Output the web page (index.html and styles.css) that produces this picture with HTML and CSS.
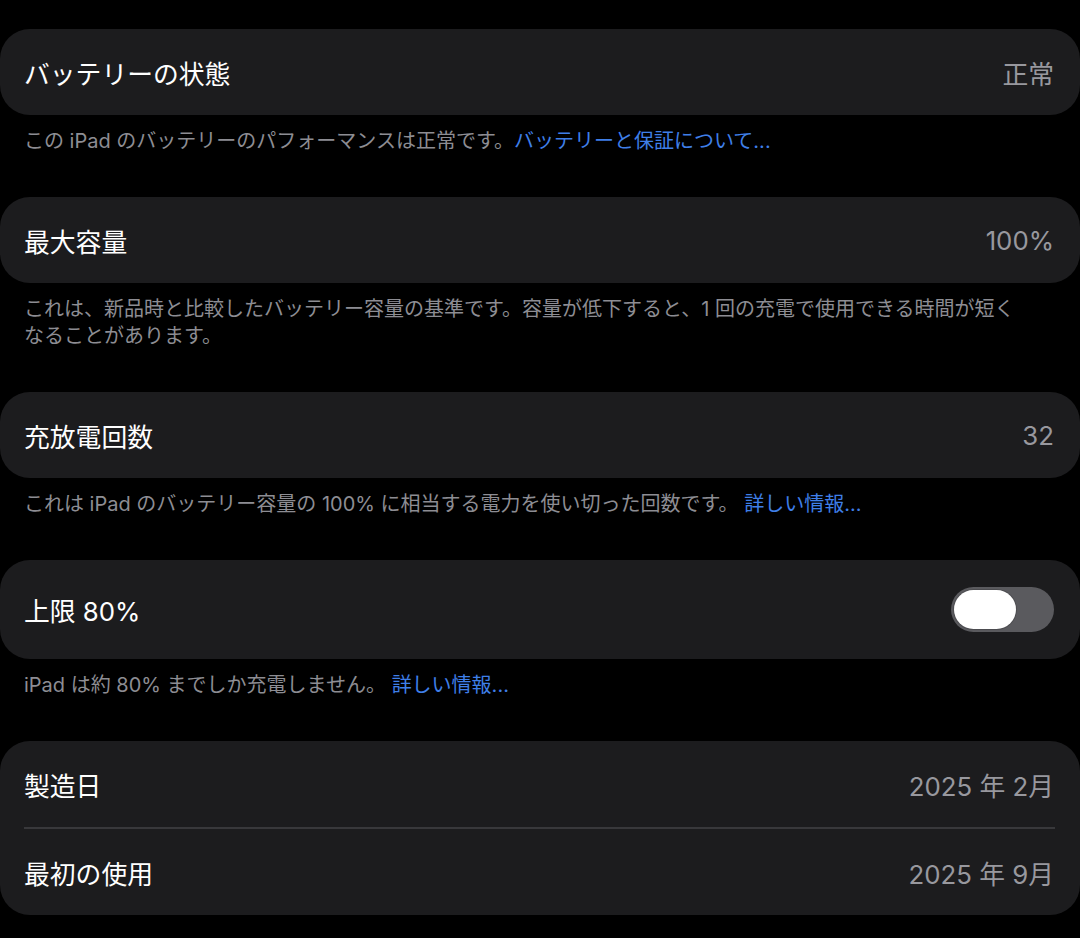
FILE: index.html
```html
<!DOCTYPE html>
<html lang="ja">
<head>
    <meta charset="UTF-8">
    <meta name="viewport" content="width=device-width, initial-scale=1.0">
    <title>バッテリーの状態</title>
    <link rel="stylesheet" href="styles.css">
</head>
<body>

    <div class="settings">
        <div class="group">
            <div class="row">
                <span class="label">バッテリーの状態</span>
                <span class="value">正常</span>
            </div>
        </div>
        <p class="footer">この iPad のバッテリーのパフォーマンスは正常です。<a href="#">バッテリーと保証について...</a></p>

        <div class="group">
            <div class="row">
                <span class="label">最大容量</span>
                <span class="value">100%</span>
            </div>
        </div>
        <p class="footer">これは、新品時と比較したバッテリー容量の基準です。容量が低下すると、1 回の充電で使用できる時間が短く<br>なることがあります。</p>

        <div class="group">
            <div class="row">
                <span class="label">充放電回数</span>
                <span class="value">32</span>
            </div>
        </div>
        <p class="footer">これは iPad のバッテリー容量の 100% に相当する電力を使い切った回数です。 <a href="#">詳しい情報...</a></p>

        <div class="group">
            <div class="row row-toggle">
                <span class="label">上限 80%</span>
                <span class="switch"><span class="knob"></span></span>
            </div>
        </div>
        <p class="footer">iPad は約 80% までしか充電しません。 <a href="#">詳しい情報...</a></p>

        <div class="group">
            <div class="row">
                <span class="label">製造日</span>
                <span class="value">2025 年 2月</span>
            </div>
            <div class="divider"></div>
            <div class="row">
                <span class="label">最初の使用</span>
                <span class="value">2025 年 9月</span>
            </div>
        </div>
    </div>

</body>
</html>
```

FILE: styles.css
```css
body {
    margin: 0;
    background-color: #000;
    font-family: 'Inter', 'Noto Sans CJK JP', sans-serif;
    color: #fff;
}

.settings {
    padding-top: 29px;
    display: flex;
    flex-direction: column;
}

.group {
    background-color: #1c1c1e;
    border-radius: 30px;
}

.row {
    display: flex;
    align-items: center;
    justify-content: space-between;
    height: 86px;
    padding: 0 26px 0 24px;
}

.row-toggle {
    height: 99px;
}

.label {
    font-size: 25.8px;
    color: #fff;
}

.value {
    font-size: 25.8px;
    color: #98989e;
}

.divider {
    height: 2px;
    margin: 0 25px 0 24px;
    background-color: #38383b;
}

.footer {
    margin: 13px 0 42px;
    padding: 0 24px;
    font-size: 20px;
    line-height: 27px;
    color: #8d8d93;
}

.footer a {
    color: #3f7fe8;
    text-decoration: none;
}

.switch {
    display: flex;
    align-items: center;
    width: 103px;
    height: 45px;
    padding: 0 3px;
    box-sizing: border-box;
    border-radius: 23px;
    background-color: #5a5a5e;
}

.knob {
    width: 62px;
    height: 39px;
    border-radius: 20px;
    background-color: #fff;
    box-shadow: 0 0 0 1px rgba(0, 0, 0, 0.15);
}
```
